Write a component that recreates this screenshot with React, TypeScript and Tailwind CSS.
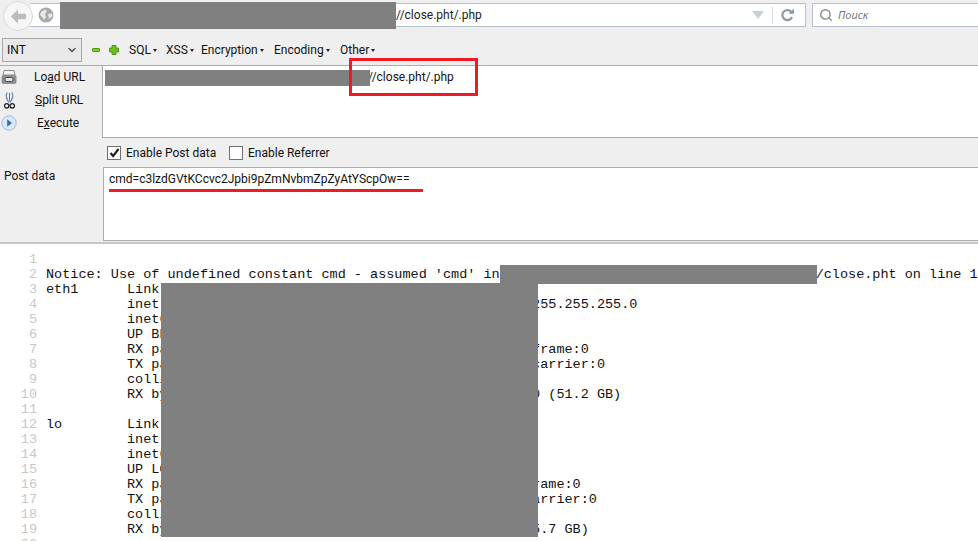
import { ChevronDown, Search } from "lucide-react";

const ui = "font-['Roboto',sans-serif] text-[12px] leading-[18px] text-[#111]";

// columns are 8.1px wide, text past col 60 sits to the right of the big grey block
const pad = (left: string, right: string, col = 60) => left.padEnd(col, " ") + right;

const outputLines = [
  "",
  "Notice: Use of undefined constant cmd - assumed 'cmd' in ".padEnd(95, " ") + "/close.pht on line 1",
  "eth1      Link encap",
  pad("          inet addr", "255.255.255.0"),
  "          inet6 addr",
  "          UP BROADCAST",
  pad("          RX packets", "frame:0"),
  pad("          TX packets", "carrier:0"),
  "          collisions",
  pad("          RX bytes", "0 (51.2 GB)"),
  "",
  "lo        Link encap",
  "          inet addr",
  "          inet6 addr",
  "          UP LOOPBACK",
  pad("          RX packets", "frame:0", 59),
  pad("          TX packets", "carrier:0", 59),
  "          collisions",
  pad("          RX bytes", "5.7 GB)"),
  "",
];

const menus = [
  { label: "SQL", width: "w-[37px]" },
  { label: "XSS", width: "w-[35px]" },
  { label: "Encryption", width: "w-[73px]" },
  { label: "Encoding", width: "w-[66px]" },
  { label: "Other", width: "w-[40px]" },
];

function Caret() {
  return <span className="ml-[2px] inline-block h-0 w-0 border-x-[2.5px] border-t-[3px] border-x-transparent border-t-[#222] align-middle" />;
}

function BackButton() {
  return (
    <div className="absolute left-[3px] top-[1px] z-10 flex h-[30px] w-[30px] items-center justify-center rounded-full border border-[#d8d8d8] bg-[#f6f6f6]">
      <svg width="17" height="15" viewBox="0 0 16 14">
        <path d="M7.5 0.5 L0.8 7 L7.5 13.5 L7.5 9.5 L15 9.5 L15 4.5 L7.5 4.5 Z" fill="#bcbcbc" />
      </svg>
    </div>
  );
}

function Globe() {
  return (
    <svg width="16" height="16" viewBox="0 0 16 16" className="shrink-0">
      <circle cx="8" cy="8" r="7.5" fill="#a9a9a9" />
      <path d="M3 5 L7 2.5 L9 4 L7 7 L8 10 L6 13 L4 10 L2 8 Z" fill="#e8e8e8" />
      <path d="M10 7 L14 6.5 L14.5 9 L11 12 Z" fill="#e8e8e8" />
    </svg>
  );
}

function Reload() {
  return (
    <svg width="15" height="14" viewBox="0 0 15 14">
      <path d="M11.5 4.2 A5 5 0 1 0 12 9" fill="none" stroke="#8c98a4" strokeWidth="2.2" />
      <path d="M8.5 5.8 L14 5.8 L14 0.5 Z" fill="#8c98a4" />
    </svg>
  );
}

function LoadIcon() {
  return (
    <svg width="16" height="15" viewBox="0 0 16 15">
      <path d="M3 0.5 H13 L14 5 H2 Z" fill="#f4f4f4" stroke="#8a8a8a" />
      <rect x="0.5" y="5" width="15" height="9" rx="2" fill="#8f8f8f" />
      <rect x="4" y="7.5" width="8" height="4" rx="1.5" fill="#e4e4e4" stroke="#444" />
    </svg>
  );
}

function Scissors() {
  return (
    <svg width="11" height="17" viewBox="0 0 11 17">
      <path d="M3 0.5 C1.5 4 3 8 5 10.5 M8 0.5 C9.5 4 8 8 6 10.5" fill="none" stroke="#6f8db5" strokeWidth="1.3" />
      <path d="M5.5 1 V9" stroke="#4f6f9f" strokeWidth="1" />
      <circle cx="2.7" cy="13.8" r="2.2" fill="none" stroke="#222" strokeWidth="1.3" />
      <circle cx="8.3" cy="13.8" r="2.2" fill="none" stroke="#222" strokeWidth="1.3" />
    </svg>
  );
}

function PlayIcon() {
  return (
    <svg width="16" height="16" viewBox="0 0 16 16">
      <circle cx="8" cy="8" r="7.2" fill="#dbe8f8" stroke="#9db9de" />
      <path d="M6.2 4.3 L11 8 L6.2 11.7 Z" fill="#2f6fc0" />
    </svg>
  );
}

function SideAction({ icon, hot, pre, post, rowClass, textClass }: { icon: React.ReactNode; hot: string; pre: string; post: string; rowClass: string; textClass: string }) {
  return (
    <div className={`flex items-center ${rowClass}`}>
      <span className="flex w-[16px] shrink-0 justify-center">{icon}</span>
      <span className={`${ui} ${textClass}`}>
        {pre}
        <span className="underline">{hot}</span>
        {post}
      </span>
    </div>
  );
}

export default function App() {
  return (
    <div className="relative flex h-[541px] w-[978px] flex-col overflow-hidden bg-white">
      {/* browser bar */}
      <div className="relative flex h-[27px] shrink-0 items-start bg-[#efefef] pt-[3px]">
        <BackButton />
        <div className="ml-[30px] flex h-[24px] w-[776px] items-center border border-l-0 border-[#b7c2cc] bg-white">
          <span className="ml-[8px]"><Globe /></span>
          <span className={`${ui} ml-[342px] text-[#222]`}>//close.pht/.php</span>
          <div className="ml-auto flex h-full items-center">
            <span className="h-0 w-0 border-x-[6px] border-t-[8px] border-x-transparent border-t-[#c5d0da]" />
            <span className="ml-[8px] h-[17px] w-px bg-[#d8dde2]" />
            <span className="ml-[7px] mr-[10px] flex"><Reload /></span>
          </div>
        </div>
        <div className="ml-[6px] flex h-[24px] flex-1 items-center border border-r-0 border-[#b7c2cc] bg-white pl-[6px]">
          <Search size={14} strokeWidth={2.4} className="text-[#8b8b8b]" />
          <span className="ml-[5px] font-['Noto_Sans',sans-serif] text-[11px] italic text-[#777]">Поиск</span>
        </div>
      </div>

      {/* hackbar */}
      <div className="h-[217px] shrink-0 border-b-2 border-[#c6c6c6] bg-[#efefef]">
        <div className="flex h-[39px] items-center border-b border-[#ababb3] pl-[2px] pt-[7px]">
          <div className={`${ui} flex h-[24px] w-[80px] items-center justify-between border border-[#a9a9a9] bg-[#e9e9e9] pl-[4px] pr-[3px]`}>
            INT
            <ChevronDown size={12} strokeWidth={3} className="text-[#555]" />
          </div>
          <span className="ml-[10px] h-[4px] w-[8px] rounded-[1px] border border-[#4c9a0c] bg-[#86d02a]" />
          <svg width="10" height="10" viewBox="0 0 10 10" className="ml-[9px]">
            <path d="M3 0.5 H7 V3 H9.5 V7 H7 V9.5 H3 V7 H0.5 V3 H3 Z" fill="#6cc01e" stroke="#3f8a0c" strokeWidth="0.8" />
          </svg>
          <div className="ml-[10px] flex">
            {menus.map((m) => (
              <span key={m.label} className={`${ui} ${m.width} whitespace-nowrap`}>
                {m.label}
                <Caret />
              </span>
            ))}
          </div>
        </div>

        <div className="flex h-[72px]">
          <div className="w-[102px] shrink-0 pl-[1px]">
            <SideAction icon={<LoadIcon />} hot="a" pre="Lo" post="d URL" rowClass="h-[20px] pt-[2px]" textClass="ml-[17px]" />
            <SideAction icon={<Scissors />} hot="S" pre="" post="plit URL" rowClass="h-[28px]" textClass="ml-[18px]" />
            <SideAction icon={<PlayIcon />} hot="x" pre="E" post="ecute" rowClass="h-[18px]" textClass="ml-[20px]" />
          </div>
          <div className="flex-1 border border-r-0 border-t-0 border-[#ababab] bg-white pl-[265px] pt-[2px]">
            <div className={ui}>//close.pht/.php</div>
          </div>
        </div>

        <div className="flex h-[29px] items-center pl-[107px] pt-[1px]">
          <span className="flex h-[14px] w-[14px] items-center justify-center border border-[#707070] bg-white">
            <svg width="11" height="10" viewBox="0 0 11 10">
              <path d="M1.5 5 L4.2 8 L9.5 1" fill="none" stroke="#222" strokeWidth="2.2" />
            </svg>
          </span>
          <span className={`${ui} ml-[5px] w-[103px]`}>Enable Post data</span>
          <span className="h-[14px] w-[14px] border border-[#707070] bg-white" />
          <span className={`${ui} ml-[5px]`}>Enable Referrer</span>
        </div>

        <div className="flex h-[74px]">
          <div className={`${ui} w-[103px] shrink-0 pl-[4px]`}>Post data</div>
          <div className="flex-1 border border-r-0 border-[#ababab] bg-white pl-[5px] pt-[2px]">
            <div className={ui}>cmd=c3lzdGVtKCcvc2Jpbi9pZmNvbmZpZyAtYScpOw==</div>
          </div>
        </div>
      </div>

      {/* response */}
      <div className="flex-1 pt-[8px] font-['Liberation_Mono',monospace] text-[13.5px] leading-[15px] text-[#111]">
        {outputLines.map((line, i) => (
          <div key={i} className="flex h-[15px]">
            <span className="w-[37px] shrink-0 text-right text-[#c8c8c8]">{i + 1}</span>
            <pre className="ml-[9px] font-['Liberation_Mono',monospace]">{line}</pre>
          </div>
        ))}
      </div>

      {/* redactions and annotations drawn over the screenshot */}
      <div className="absolute left-[60px] top-[2px] h-[27px] w-[336px] bg-[#808080]" />
      <div className="absolute left-[105px] top-[70px] h-[16px] w-[265px] bg-[#808080]" />
      <div className="absolute left-[349px] top-[58px] h-[38px] w-[129px] border-[3px] border-[#ed1c24]" />
      <div className="absolute left-[109px] top-[189px] h-[3px] w-[314px] bg-[#ed1c24]" />
      <div className="absolute left-[500px] top-[265px] h-[19px] w-[317px] bg-[#808080]" />
      <div className="absolute left-[161px] top-[283px] h-[254px] w-[377px] bg-[#808080]" />
    </div>
  );
}
